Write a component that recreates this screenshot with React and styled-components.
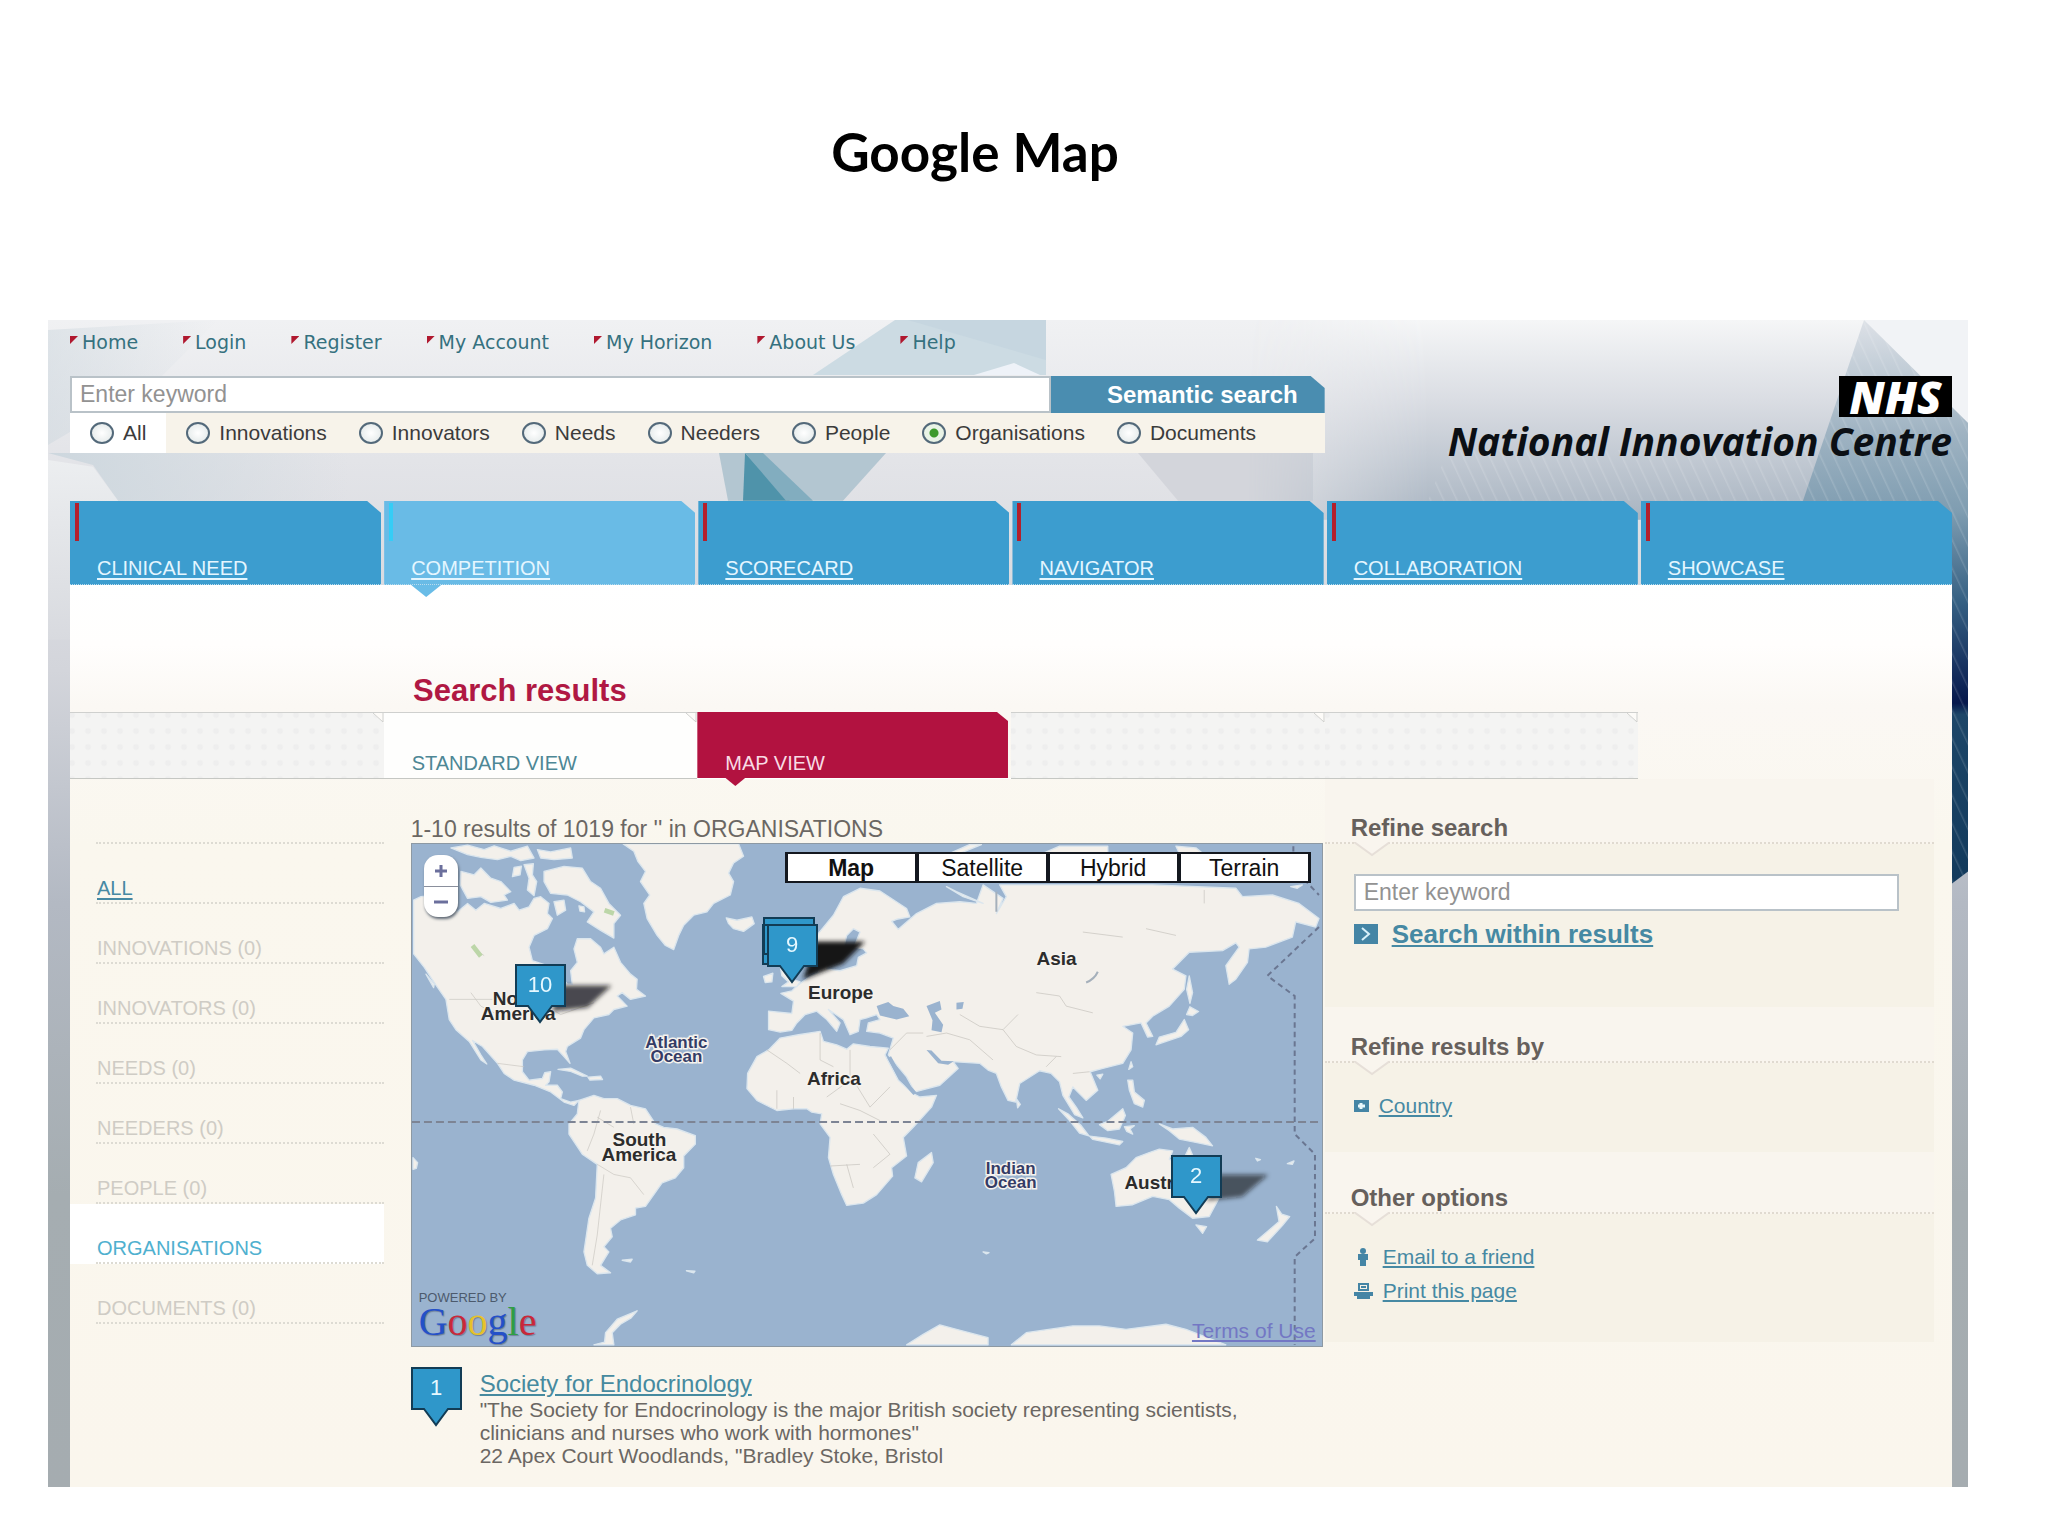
import React, { useState } from 'react';
import styled, { createGlobalStyle, css } from 'styled-components';

const GlobalStyle = createGlobalStyle`
  *, *::before, *::after {
    box-sizing: border-box;
  }

  body {
    margin: 0;
    background: #fff;
    font-family: 'Liberation Sans', Arial, sans-serif;
    color: #6b6763;
  }
`;

const Page = styled.div`
  padding: 0 80px 48px 48px;
`;

const PageTitle = styled.h1`
  margin: 0;
  padding: 118px 66px 134px 0;
  font-family: Lato, 'Open Sans', sans-serif;
  font-size: 53px;
  line-height: 68px;
  font-weight: 700;
  text-align: center;
  color: #000;
`;

const Stage = styled.div`
  position: relative;
  padding: 0 16px 0 22px;
  background: #e6e7ea;
`;

const Backdrop = styled.svg`
  position: absolute;
  inset: 0;
  width: 100%;
  height: 100%;
`;

const Site = styled.div`
  position: relative;
`;

// Top navigation
const TopNav = styled.nav`
  display: flex;
  gap: 45px;
  height: 56px;
  padding-top: 10px;
`;

const TopLink = styled.a`
  display: flex;
  align-items: flex-start;
  gap: 4px;
  font-family: 'DejaVu Sans', Verdana, sans-serif;
  font-size: 19px;
  line-height: 24px;
  color: #35717f;
  text-decoration: none;

  &::before {
    content: '';
    width: 8px;
    height: 8px;
    margin-top: 6px;
    background: #b0182f;
    clip-path: polygon(0 0, 100% 0, 0 100%);
  }
`;

// Search and logo
const Masthead = styled.header`
  display: grid;
  grid-template-columns: 2fr 1fr;
  height: 125px;
`;

const SearchForm = styled.form`
  display: flex;
  flex-direction: column;
`;

const SearchRow = styled.div`
  display: flex;
  height: 37px;
`;

const TextInput = styled.input`
  width: 100%;
  height: 37px;
  padding: 0 8px;
  border: 2px solid #b9c2c8;
  border-radius: 0;
  background: #fff;
  font-family: inherit;
  font-size: 23px;
  color: #555;

  &::placeholder {
    color: #929292;
    opacity: 1;
  }
`;

const SearchButton = styled.button`
  flex: 0 0 274px;
  padding: 0 27px 0 0;
  border: 0;
  background: #4a8db0;
  clip-path: polygon(0 0, calc(100% - 14px) 0, 100% 12px, 100% 100%, 0 100%);
  font-family: inherit;
  font-size: 24px;
  font-weight: 700;
  text-align: right;
  color: #fff;
`;

const ScopeRow = styled.div`
  display: flex;
  height: 40px;
  background: #f7f3ea;
`;

const Scope = styled.label`
  display: flex;
  align-items: center;
  gap: 9px;
  padding: 0 12px 0 20px;
  font-size: 21px;
  color: #3b3b3b;

  &:first-of-type {
    padding-right: 20px;
    background: #fff;
  }
`;

const Radio = styled.input`
  appearance: none;
  width: 24px;
  height: 22px;
  margin: 0;
  border: 2px solid #53697a;
  border-radius: 50%;
  background: radial-gradient(#ffffff, #dfe6e6);

  &:checked {
    background: radial-gradient(circle, #3c9a2c 4px, #e9f3e6 5px);
  }
`;

const Logo = styled.div`
  display: flex;
  flex-direction: column;
  align-items: flex-end;
  font-family: 'Open Sans', 'Noto Sans', sans-serif;
  font-style: italic;
  white-space: nowrap;
`;

const LogoMark = styled.span`
  width: 113px;
  height: 41px;
  background: #000;
  font-size: 45px;
  line-height: 41px;
  font-weight: 800;
  text-align: center;
  color: #fff;
`;

const LogoName = styled.span`
  font-size: 39px;
  line-height: 48px;
  font-weight: 700;
  color: #0b0f14;
`;

// Section tabs
const Sections = styled.nav`
  display: grid;
  grid-template-columns: repeat(6, 1fr);
  gap: 3px;
`;

const SectionTab = styled.div`
  position: relative;
  height: 84px;

  ${({ $active }) =>
    $active &&
    css`
      &::after {
        content: '';
        position: absolute;
        top: 100%;
        left: 27px;
        width: 30px;
        height: 12px;
        background: #69bce7;
        clip-path: polygon(0 0, 100% 0, 50% 100%);
        z-index: 1;
      }
    `}
`;

const SectionLink = styled.a`
  display: flex;
  align-items: flex-end;
  height: 100%;
  padding: 0 0 4px 27px;
  background: linear-gradient(${({ $active }) => ($active ? '#35cdf6, #35cdf6' : '#b3202c, #b3202c')})
    no-repeat 5px 2px / 4px 38px
    ${({ $active }) => ($active ? '#69bbe6' : '#3c9dcf')};
  border-bottom: 1px dotted #b9dcee;
  clip-path: polygon(0 0, calc(100% - 14px) 0, 100% 12px, 100% 100%, 0 100%);
  font-size: 20px;
  line-height: 24px;
  color: #e4f6ff;
  text-underline-offset: 3px;
`;

// White panel under the tabs
const Panel = styled.main`
  padding-bottom: 20px;
  background: linear-gradient(#ffffff, #fffefd 60px, #fbf8f4 120px, #faf7ee 260px, #faf6ed);
`;

const Heading = styled.h2`
  margin: 0;
  padding: 88px 0 3px 343px;
  font-size: 31px;
  line-height: 36px;
  font-weight: 700;
  color: #b01843;
`;

const ViewTabs = styled.div`
  display: grid;
  grid-template-columns: repeat(6, 1fr);
`;

const ViewTab = styled.div`
  position: relative;
  height: 67px;
  border-bottom: 1px solid #c5c7c3;
  background: #f4f4f3;

  ${({ $kind }) =>
    $kind === 'blank' &&
    css`
      border-top: 1px solid #cfd0ce;
      background: radial-gradient(#eeeeee 2px, transparent 4px) 10px 10px / 16px 16px #f4f4f3;
    `}

  ${({ $kind }) =>
    $kind === 'open' &&
    css`
      border-top: 1px solid #cfd0ce;
      background: #fefefd;
    `}

  ${({ $kind }) =>
    $kind === 'active' &&
    css`
      border-bottom-color: #fff;
      background: transparent;

      &::after {
        content: '';
        position: absolute;
        top: 65px;
        left: 27px;
        width: 22px;
        height: 9px;
        background: #b21240;
        clip-path: polygon(0 0, 100% 0, 50% 100%);
      }
    `}
`;

const ViewLink = styled.a`
  display: flex;
  align-items: flex-end;
  height: 100%;
  margin-right: 3px;
  padding: 0 0 3px 28px;
  background: ${({ $active }) => ($active ? '#b21240' : 'transparent')};
  clip-path: polygon(0 0, calc(100% - 11px) 0, 100% 9px, 100% 100%, 0 100%);
  font-size: 20px;
  line-height: 24px;
  color: ${({ $active }) => ($active ? '#f8dbe4' : '#4d8795')};
  text-decoration: none;
`;

const TabNotch = styled.svg`
  position: absolute;
  top: 0;
  right: 0;
  width: 12px;
  height: 10px;
`;

const Columns = styled.div`
  display: grid;
  grid-template-columns: 1fr 3fr 2fr;
`;

// Left menu
const Menu = styled.ul`
  margin: 0;
  padding: 5px 0 0;
  list-style: none;
`;

const MenuItem = styled.li`
  height: 60px;
  padding-left: 26px;
  background: ${({ $current }) => ($current ? '#fff' : 'transparent')};
`;

const MenuLink = styled.a`
  display: flex;
  align-items: flex-end;
  height: 100%;
  padding: 0 0 2px 1px;
  border-bottom: 2px dotted #dddbd3;
  font-size: 20px;
  line-height: 24px;
  color: ${({ $tone }) => $tone};
  text-decoration: ${({ $underline }) => ($underline ? 'underline' : 'none')};
  text-underline-offset: 3px;
`;

const Results = styled.section`
  padding: 36px 2px 0 27px;
`;

const Summary = styled.p`
  margin: 0;
  font-size: 23px;
  line-height: 28px;
`;

// Map
const MapFrame = styled.div`
  position: relative;
  aspect-ratio: 912 / 504;
  border: 1px solid #8d99a3;
  background: #9ab3cf;
  overflow: hidden;
`;

const MapDrawing = styled.svg`
  display: block;
  width: 100%;
  height: 100%;

  text {
    font-size: 19px;
    font-weight: 700;
    fill: #2c2c2c;
    stroke: #f6f3ee;
    stroke-width: 3px;
    paint-order: stroke;
  }

  .ocean text {
    font-size: 17px;
    fill: #343c66;
    text-anchor: middle;
  }
`;

const ZoomControl = styled.div`
  position: absolute;
  top: 11px;
  left: 12px;
  width: 34px;
  border-radius: 14px;
  background: #fff;
  box-shadow: 1px 2px 3px #5c6672;
`;

const ZoomButton = styled.button`
  display: grid;
  place-items: center;
  width: 100%;
  height: 31px;
  padding: 0;
  border: 0;
  background: none;

  & + & {
    border-top: 1px solid #8a8f9c;
  }
`;

const MapTypes = styled.div`
  position: absolute;
  top: 8px;
  right: 11px;
  display: flex;
  border: 1px solid #14181f;
`;

const MapType = styled.button`
  width: 131px;
  height: 29px;
  padding: 0;
  border: 2px solid #14181f;
  border-width: 1px 2px;
  background: #fff;
  font-family: inherit;
  font-size: 23px;
  line-height: 24px;
  font-weight: ${({ $active }) => ($active ? 700 : 400)};
  color: #111;
`;

const PinButton = styled.button`
  position: absolute;
  left: ${({ $x }) => $x}%;
  top: ${({ $y }) => $y}%;
  padding: 0;
  border: 0;
  background: none;
`;

const PinShape = styled.svg`
  display: block;
  flex: none;
  width: 51px;
  height: 59px;

  path {
    fill: #2f97ca;
    stroke: #123c55;
    stroke-width: 2;
  }

  text {
    font-size: 22px;
    fill: #e6f8ff;
    text-anchor: middle;
  }
`;

const Powered = styled.div`
  position: absolute;
  left: 7px;
  bottom: 6px;
  display: flex;
  flex-direction: column;
  font-size: 13px;
  line-height: 12px;
  color: #4c5a6d;
`;

const Google = styled.span`
  font-family: 'Liberation Serif', serif;
  font-size: 40px;
  line-height: 36px;
  text-shadow: 1px 1px 1px #6d7f98;
`;

const Letter = styled.span`
  color: ${({ $color }) => $color};
`;

const Terms = styled.a`
  position: absolute;
  right: 6px;
  bottom: 2px;
  font-size: 21px;
  line-height: 26px;
  color: #7377c4;
`;

const Result = styled.article`
  display: flex;
  gap: 18px;
  padding-top: 20px;
`;

const ResultTitle = styled.a`
  display: block;
  padding-top: 3px;
  font-size: 24px;
  line-height: 28px;
  color: #468a9f;
`;

const ResultText = styled.p`
  margin: 0;
  max-width: 800px;
  font-size: 21px;
  line-height: 23px;
`;

// Right column
const Aside = styled.aside`
  padding-right: 18px;
`;

const Block = styled.section`
  height: ${({ $height }) => $height}px;
  background: #f6f2e7;
`;

const BlockTitle = styled.h3`
  position: relative;
  height: ${({ $height }) => $height}px;
  margin: 0;
  padding-left: 26px;
  display: flex;
  align-items: flex-end;
  background: #f9f5ee;
  border-bottom: 2px dotted #e0dad0;
  font-size: 24px;
  line-height: 28px;
  font-weight: 700;
  color: #66605c;
`;

const Notch = styled.svg`
  position: absolute;
  top: 100%;
  left: 29px;
  width: 36px;
  height: 15px;
`;

const BlockBody = styled.div`
  display: flex;
  flex-direction: column;
  align-items: flex-start;
  gap: ${({ $gap }) => $gap}px;
  padding: 30px 35px 0 29px;
`;

const OptionLink = styled.a`
  display: flex;
  align-items: center;
  gap: ${({ $strong }) => ($strong ? 14 : 10)}px;
  font-size: ${({ $strong }) => ($strong ? 26 : 21)}px;
  font-weight: ${({ $strong }) => ($strong ? 700 : 400)};
  line-height: 26px;
  color: #4689a3;
`;

const topLinks = ['Home', 'Login', 'Register', 'My Account', 'My Horizon', 'About Us', 'Help'];
const scopes = ['All', 'Innovations', 'Innovators', 'Needs', 'Needers', 'People', 'Organisations', 'Documents'];
const sections = ['CLINICAL NEED', 'COMPETITION', 'SCORECARD', 'NAVIGATOR', 'COLLABORATION', 'SHOWCASE'];
const menu = [
  { label: 'ALL', tone: '#4689a3', underline: true },
  { label: 'INNOVATIONS (0)' },
  { label: 'INNOVATORS (0)' },
  { label: 'NEEDS (0)' },
  { label: 'NEEDERS (0)' },
  { label: 'PEOPLE (0)' },
  { label: 'ORGANISATIONS', tone: '#4fb0cf', current: true },
  { label: 'DOCUMENTS (0)' },
];
const googleLetters = [
  ['G', '#2450c8'],
  ['o', '#c9283a'],
  ['o', '#e6c22a'],
  ['g', '#2450c8'],
  ['l', '#2f9e45'],
  ['e', '#c9283a'],
];

const Skyline = () => (
  <Backdrop viewBox="0 0 1920 1168" preserveAspectRatio="none" aria-hidden="true">
    <defs>
      <linearGradient id="side" x1="0" y1="0" x2="0" y2="1">
        <stop offset="0" stopColor="#f0f1f3" />
        <stop offset="0.12" stopColor="#e3e4e8" />
        <stop offset="0.3" stopColor="#d3d5db" />
        <stop offset="0.5" stopColor="#b3b9c3" />
        <stop offset="0.75" stopColor="#a5adb1" />
        <stop offset="1" stopColor="#a5acb0" />
      </linearGradient>
      <linearGradient id="haze" x1="0" y1="0" x2="1" y2="0">
        <stop offset="0" stopColor="#cdd7de" />
        <stop offset="1" stopColor="#cdd7de" stopOpacity="0" />
      </linearGradient>
      <linearGradient id="ledge" x1="0" y1="0" x2="0" y2="1">
        <stop offset="0" stopColor="#eceef0" />
        <stop offset="1" stopColor="#d8dadf" />
      </linearGradient>
      <linearGradient id="sky" x1="0" y1="0" x2="0" y2="1">
        <stop offset="0" stopColor="#f5f6f7" />
        <stop offset="0.4" stopColor="#dadde3" />
        <stop offset="1" stopColor="#a8b4c1" />
      </linearGradient>
      <linearGradient id="skyFade" x1="0" y1="0" x2="1" y2="0">
        <stop offset="0" stopColor="#fff" stopOpacity="0" />
        <stop offset="0.25" stopColor="#fff" stopOpacity="1" />
      </linearGradient>
      <mask id="fade">
        <rect x="1200" y="0" width="720" height="400" fill="url(#skyFade)" />
      </mask>
      <linearGradient id="tower" x1="0" y1="0" x2="0" y2="1">
        <stop offset="0" stopColor="#dde1e7" />
        <stop offset="0.2" stopColor="#9fb3c2" />
        <stop offset="0.34" stopColor="#7f9db1" />
        <stop offset="0.5" stopColor="#356083" />
        <stop offset="0.68" stopColor="#06184c" />
        <stop offset="0.7" stopColor="#1d4668" />
        <stop offset="1" stopColor="#123a5c" />
      </linearGradient>
      <pattern id="ribs" width="12" height="20" patternUnits="userSpaceOnUse" patternTransform="rotate(-25)">
        <path d="M0 0V20" stroke="#fff" strokeOpacity="0.14" strokeWidth="3" />
      </pattern>
    </defs>
    <rect width="1920" height="1168" fill="url(#side)" />
    <path d="M0 10L170 0L110 60L0 125Z" fill="url(#haze)" opacity="0.5" />
    <path d="M0 133H300V181H70L45 145Z" fill="url(#haze)" />
    <path d="M0 140L45 147L70 181V320H0Z" fill="url(#ledge)" />
    <path d="M847 0H998V55H765Z" fill="#ccdbe3" />
    <path d="M860 0L998 40V0Z" fill="#bfd2dd" opacity="0.5" />
    <path d="M926 55L966 43L992 55Z" fill="#eef2f8" />
    <path d="M671 133H838L795 181H680Z" fill="#b3c6d1" />
    <path d="M697 133L742 181H695Z" fill="#4f93aa" />
    <path d="M697 133H715L765 181H738Z" fill="#82adbf" />
    <path d="M1090 133H1265V181H1130Z" fill="#d3d5db" />
    <rect x="1200" width="720" height="200" fill="url(#sky)" mask="url(#fade)" />
    <path d="M1816 0H1920V103Z" fill="#f1f3f6" />
    <path d="M1816 0L1755 181V564H1904L1920 552V103Z" fill="url(#tower)" />
    <path d="M1816 0L1755 181V564H1904L1920 552V103Z" fill="url(#ribs)" />
    <path d="M1400 130H1770L1755 181H1380Z" fill="url(#ribs)" />
  </Backdrop>
);

const Pin = ({ number, stacked }) => (
  <PinShape viewBox="0 0 51 59" overflow="visible" aria-hidden="true">
    {stacked && <path d="M-4 1H45V40H-4Z M-3 -6H47V30H-3Z" />}
    <path d="M1 1H50V42H37L25 58L13 42H1Z" />
    <text x="25" y="28">{number}</text>
  </PinShape>
);

const WorldMap = () => (
  <MapDrawing viewBox="0 0 912 504" preserveAspectRatio="none" role="img" aria-label="World map">
    <defs>
      <filter id="soft">
        <feGaussianBlur stdDeviation="2" />
      </filter>
    </defs>
    <g fill="#f3f0eb" stroke="#dbe6ee" strokeWidth="4" strokeLinejoin="round">
      {/* Americas */}
      <g transform="translate(-11 -13) scale(0.3333 0.338)">
        <path d="M668 38H1015L1030 75L1000 95L985 125L1000 150L990 190L940 215L920 240L880 250L850 280L835 310L820 352L795 340L770 310L740 260L730 215L748 190L720 150L735 120L712 90L700 60Z" />
        <path d="M38 205L60 195L110 190L140 215L170 240L200 215L225 235L250 215L300 230L340 215L355 235L385 225L400 200L420 195L445 215L440 245L455 260L440 290L400 310L385 345L395 385L440 400L480 430L500 455L515 455L510 415L530 390L520 350L530 320L570 320L600 345L610 365L640 345L660 390L690 425L710 440L708 470L735 490L690 500L665 480L650 490L680 520L640 530L625 545L580 555L550 590L540 615L500 640L495 655L508 690L490 670L470 648L430 650L380 655L365 680L365 715L385 740L425 735L432 718L450 715L445 745L435 755L470 755L485 775L480 795L510 805L535 800L520 815L490 805L450 775L400 755L340 740L310 720L290 690L245 640L215 622L240 665L258 692L240 680L205 625L165 590L145 560L135 500L100 450L70 405L38 365Z" />
        <path d="M430 120L490 105L545 110L570 150L600 170L625 215L660 250L640 275L640 318L600 295L560 270L580 240L540 210L500 190L450 185L430 150Z" />
        <path d="M180 120L220 130L240 110L270 140L300 150L330 180L310 190L320 205L270 212L240 195L200 200L178 160Z" />
        <path d="M150 50L200 42L250 55L280 44L330 60L380 45L400 80L360 88L330 75L290 85L240 78L200 70Z" />
        <path d="M410 55L450 62L510 50L515 80L460 85L420 80Z" />
        <path d="M370 100L398 97L395 130L408 150L400 192L380 175L385 140Z" />
        <path d="M340 108L362 104L358 130L335 135Z" />
        <path d="M460 210L490 205L495 235L470 250Z" />
        <path d="M535 222L550 225L552 240L538 238Z" />
        <path d="M978 258L1010 265L1055 255L1062 275L1030 298L1000 290L985 275Z" />
        <path d="M472 708L510 704L560 728L545 728L510 714Z" />
        <path d="M562 731L600 728L606 738L568 740Z" />
        <path d="M75 425L100 455L98 465Z" />
        <path d="M535 800L580 785L610 795L650 795L690 815L735 825L765 870L790 880L830 885L885 905L885 930L850 965L850 1000L825 1030L785 1045L760 1080L735 1115L705 1120L705 1140L660 1155L630 1180L635 1205L610 1235L625 1250L600 1290L630 1312L590 1315L560 1290L550 1250L565 1150L585 1090L590 990L545 960L505 900L505 870L530 840Z" />
        <path d="M665 1275L695 1272L690 1280Z M858 1306L884 1307L880 1312Z" />
        <path d="M580 1526L612 1518L615 1490L650 1450L710 1425L692 1446L660 1465L635 1490L640 1526Z" />
        <path d="M36 970L50 985L46 1002L36 1005Z" />
      </g>
      {/* Europe, Africa, Asia and Oceania */}
      <g transform="translate(449 -13) scale(0.3333 0.338)">
        <path d="M-275 650L-240 615L-185 605L-120 595L-110 625L-70 635L-40 648L-20 632L30 640L85 645L75 665L115 740L160 780L180 790L230 785L215 820L160 880L130 910L140 965L95 1000L98 1025L50 1080L10 1105L-40 1112L-55 1080L-80 1020L-95 970L-90 910L-120 870L-115 840L-145 835L-160 825L-200 825L-250 830L-310 800L-340 765L-338 720L-310 670Z" />
        <path d="M215 955L220 985L185 1042L165 1030L175 985Z" />
        <path d="M-275 535L-205 542L-200 505L-238 482L-205 475L-190 460L-150 432L-125 420L-118 395L-100 390L-100 410L-60 415L-10 400L-5 375L20 362L10 350L-18 345L0 300L-20 290L-40 310L-50 350L-80 365L-95 345L-125 345L-130 310L-80 250L-50 195L0 170L60 178L140 230L150 255L110 262L95 268L115 292L170 245L230 215L300 210L350 215L370 160L430 200L410 245L440 195L420 160H880L1130 170L1150 195L1240 190L1320 215L1380 260L1370 285L1310 270L1300 315L1220 345L1170 350L1165 390L1130 440L1110 455L1100 400L1140 345L1130 332L1090 355L990 360L940 410L980 430L975 470L930 520L880 550L860 570L880 610L865 612L845 570L790 580L820 600L815 650L790 690L730 705L692 715L715 770L680 800L640 760L628 790L650 820L670 852L645 842L610 785L600 745L575 720L540 712L480 750L468 805L445 800L425 760L410 720L385 710L360 690L280 685L295 705L240 755L165 775L140 730L85 665L100 615L60 600L20 595L25 570L60 560L50 545L20 555L0 560L-5 595L-30 605L-50 560L-95 530L-60 570L-70 595L-100 560L-130 535L-165 545L-190 570L-205 592L-240 597L-275 590Z" />
        <path d="M-290 432L-262 422L-265 448L-285 450Z M-235 462L-215 448L-235 430L-240 400L-225 385L-205 440L-180 448L-190 462Z" />
        <path d="M975 560L988 590L965 610L890 635L900 612L950 598Z M992 522L1018 536L1000 548L982 545Z" />
        <path d="M990 430L1000 480L992 512L982 470Z M815 685L820 700L808 708Z M712 725L730 722L722 736Z" />
        <path d="M470 795L482 812L474 822Z M805 740L820 740L825 775L855 800L850 820L825 810L810 770Z" />
        <path d="M720 872L745 862L790 825L798 845L780 885L745 890Z" />
        <path d="M597 825L625 840L665 875L688 905L660 897L630 860Z M690 906L740 912L790 922L780 932L700 916Z" />
        <path d="M795 878L825 875L812 885L820 900L802 892Z M900 870L940 885L1000 880L1040 910L1060 935L1010 925L960 915L930 890Z" />
        <path d="M755 1020L800 1000L830 970L870 955L900 945L940 950L930 975L965 990L990 940L1010 985L1060 1040L1085 1080L1050 1145L1000 1150L960 1120L930 1095L880 1085L820 1110L770 1115L765 1070Z" />
        <path d="M1010 1170L1042 1175L1030 1195Z M1252 1115L1268 1138L1292 1145L1270 1172L1225 1220L1195 1215L1260 1160Z" />
        <path d="M140 1526L190 1495L240 1467L290 1480L385 1505V1526Z M455 1526L500 1490L640 1470L720 1470L800 1480L920 1465L980 1480L1100 1526Z" />
        <path d="M270 66L330 40H365L300 66Z M550 66L600 45H745V66Z M950 45L1010 50L1030 66H960Z M260 165L290 180L370 215L310 195Z" />
        <path d="M1190 972L1204 976L1195 980Z M1285 988L1305 980L1300 990Z M370 1250L388 1252L380 1256Z M1295 165L1330 160L1315 170Z" />
      </g>
    </g>
    <g transform="translate(449 -13) scale(0.3333 0.338)">
      {/* inland seas */}
      <g fill="#9ab3cf">
        <path d="M50 520L85 508L100 520L130 528L148 550L110 560L60 548Z" />
        <path d="M200 520L240 505L245 530L225 540L250 575L245 598L215 592L218 562Z" />
        <path d="M290 510L312 508L308 528L290 530Z M200 650L215 652L245 682L282 684L265 694L235 690Z" />
      </g>
      <path d="M88 672L120 730L165 780" fill="none" stroke="#9ab3cf" strokeWidth="12" />
      <path d="M680 450Q705 440 715 418M410 180V240" fill="none" stroke="#a5b0bb" strokeWidth="6" />
      {/* borders */}
      <g fill="none" stroke="#c4c1bb" strokeWidth="2">
        <path d="M300 545L360 580L430 590L470 640L530 665L605 670M430 590L475 545M200 610L260 600L330 620L400 680M560 700L590 670M640 720L690 715M90 650L140 600L190 600" />
        <path d="M-280 650L-220 690L-180 720M-120 600L-120 680L-80 700M-30 650L-30 740L-100 790M-20 740L30 820L90 760M-250 770L-250 825M-200 790V825M-60 810L0 830L60 860M-90 995L0 990M-40 990L-20 1060M40 900L90 960L40 1000" />
        <path d="M530 480L600 490L620 520L700 540M670 300L790 315M860 290L950 310M1035 175V215" />
      </g>
      <path d="M1303 45V110L1380 190M1380 285L1225 430L1307 490V900L1368 960V1210L1307 1265V1526" fill="none" stroke="#6a7691" strokeWidth="6" strokeDasharray="16 12" />
    </g>
    <g transform="translate(-11 -13) scale(0.3333 0.338)" fill="none" stroke="#c9c6c0" strokeWidth="2">
      <path d="M590 990L640 1020L690 1030L730 1080M600 830L580 900L560 950M640 880L590 850M610 1020L590 1200L575 1290M690 820L700 870M145 500H400L480 545L580 510M290 690L370 700M215 345L250 370M210 480L240 520L280 540" />
      <path d="M215 340L240 372M612 235L640 245" stroke="#bcd6a8" strokeWidth="14" />
    </g>
    <path d="M0 279H908" stroke="#7d8494" strokeWidth="2" strokeDasharray="8 4" />
    <text x="81" y="162">North</text>
    <text x="69" y="177">America</text>
    <text x="397" y="156">Europe</text>
    <text x="396" y="242">Africa</text>
    <text x="626" y="121">Asia</text>
    <text x="201" y="303">South</text>
    <text x="190" y="318">America</text>
    <text x="714" y="346">Australia</text>
    <g className="ocean">
      <text x="265" y="205">Atlantic</text>
      <text x="265" y="219">Ocean</text>
      <text x="600" y="331">Indian</text>
      <text x="600" y="345">Ocean</text>
    </g>
    <g fill="#151517" filter="url(#soft)">
      <path d="M404 98H454L432 120L392 136Z" />
      <path d="M150 142H200L176 164L140 168Z" opacity="0.75" />
      <path d="M808 332H858L832 354L796 358Z" opacity="0.6" />
    </g>
  </MapDrawing>
);

const CornerNotch = () => (
  <TabNotch viewBox="0 0 12 10" aria-hidden="true">
    <path d="M0 0H12V10Z" fill="#fdfbf8" />
    <path d="M1 0L11 9V0" fill="none" stroke="#cfd0ce" />
  </TabNotch>
);

const BlockHeading = ({ height, children }) => (
  <BlockTitle $height={height}>
    {children}
    <Notch viewBox="0 0 36 15" aria-hidden="true">
      <path d="M0 0L18 13L36 0" fill="#f9f5ee" stroke="#e6dfd8" strokeWidth="2" />
    </Notch>
  </BlockTitle>
);

const App = () => {
  const [scope, setScope] = useState('Organisations');
  const [mapType, setMapType] = useState('Map');

  return (
    <>
      <GlobalStyle />
      <Page>
        <PageTitle>Google Map</PageTitle>
        <Stage>
          <Skyline />
          <Site>
            <TopNav>
              {topLinks.map((label) => (
                <TopLink key={label} href="#">{label}</TopLink>
              ))}
            </TopNav>

            <Masthead>
              <SearchForm onSubmit={(e) => e.preventDefault()}>
                <SearchRow>
                  <TextInput type="text" placeholder="Enter keyword" aria-label="Keyword" />
                  <SearchButton type="submit">Semantic search</SearchButton>
                </SearchRow>
                <ScopeRow role="radiogroup" aria-label="Search in">
                  {scopes.map((label) => (
                    <Scope key={label}>
                      <Radio
                        type="radio"
                        name="scope"
                        checked={scope === label}
                        onChange={() => setScope(label)}
                      />
                      {label}
                    </Scope>
                  ))}
                </ScopeRow>
              </SearchForm>
              <Logo>
                <LogoMark>NHS</LogoMark>
                <LogoName>National Innovation Centre</LogoName>
              </Logo>
            </Masthead>

            <Sections>
              {sections.map((label) => (
                <SectionTab key={label} $active={label === 'COMPETITION'}>
                  <SectionLink href="#" $active={label === 'COMPETITION'}>{label}</SectionLink>
                </SectionTab>
              ))}
            </Sections>

            <Panel>
              <Heading>Search results</Heading>
              <ViewTabs>
                <ViewTab $kind="blank"><CornerNotch /></ViewTab>
                <ViewTab $kind="open"><ViewLink href="#">STANDARD VIEW</ViewLink><CornerNotch /></ViewTab>
                <ViewTab $kind="active"><ViewLink href="#" $active>MAP VIEW</ViewLink></ViewTab>
                <ViewTab $kind="blank"><CornerNotch /></ViewTab>
                <ViewTab $kind="blank"><CornerNotch /></ViewTab>
              </ViewTabs>

              <Columns>
                <Menu>
                  <MenuItem><MenuLink as="span" /></MenuItem>
                  {menu.map((item) => (
                    <MenuItem key={item.label} $current={item.current}>
                      <MenuLink href="#" $tone={item.tone || '#cfccc5'} $underline={item.underline}>
                        {item.label}
                      </MenuLink>
                    </MenuItem>
                  ))}
                </Menu>

                <Results>
                  <Summary>1-10 results of 1019 for '' in ORGANISATIONS</Summary>
                  <MapFrame>
                    <WorldMap />
                    <ZoomControl>
                      <ZoomButton type="button" aria-label="Zoom in">
                        <svg width="14" height="14" viewBox="0 0 14 14">
                          <path d="M7 1V13M1 7H13" stroke="#6b6f9c" strokeWidth="3" />
                        </svg>
                      </ZoomButton>
                      <ZoomButton type="button" aria-label="Zoom out">
                        <svg width="14" height="14" viewBox="0 0 14 14">
                          <path d="M0 7H14" stroke="#6b6f9c" strokeWidth="3" />
                        </svg>
                      </ZoomButton>
                    </ZoomControl>
                    <MapTypes>
                      {['Map', 'Satellite', 'Hybrid', 'Terrain'].map((type) => (
                        <MapType
                          key={type}
                          type="button"
                          $active={mapType === type}
                          onClick={() => setMapType(type)}
                        >
                          {type}
                        </MapType>
                      ))}
                    </MapTypes>
                    <PinButton type="button" $x={11.4} $y={24}><Pin number="10" /></PinButton>
                    <PinButton type="button" $x={39} $y={16}><Pin number="9" stacked /></PinButton>
                    <PinButton type="button" $x={83.4} $y={62}><Pin number="2" /></PinButton>
                    <Powered>
                      POWERED BY
                      <Google>
                        {googleLetters.map(([letter, color], i) => (
                          <Letter key={i} $color={color}>{letter}</Letter>
                        ))}
                      </Google>
                    </Powered>
                    <Terms href="#">Terms of Use</Terms>
                  </MapFrame>

                  <Result>
                    <Pin number="1" />
                    <div>
                      <ResultTitle href="#">Society for Endocrinology</ResultTitle>
                      <ResultText>
                        "The Society for Endocrinology is the major British society representing scientists,
                        clinicians and nurses who work with hormones"
                      </ResultText>
                      <ResultText>22 Apex Court Woodlands, "Bradley Stoke, Bristol</ResultText>
                    </div>
                  </Result>
                </Results>

                <Aside>
                  <Block $height={228}>
                    <BlockHeading height={65}>Refine search</BlockHeading>
                    <BlockBody $gap={10}>
                      <TextInput type="text" placeholder="Enter keyword" aria-label="Refine keyword" />
                      <OptionLink href="#" $strong>
                        <svg width="24" height="20" viewBox="0 0 24 20" aria-hidden="true">
                          <rect width="24" height="20" fill="#4485a5" />
                          <path d="M8 4L15 10L8 16" fill="none" stroke="#d8f1fa" strokeWidth="2" />
                        </svg>
                        Search within results
                      </OptionLink>
                    </BlockBody>
                  </Block>
                  <Block $height={145}>
                    <BlockHeading height={56}>Refine results by</BlockHeading>
                    <BlockBody>
                      <OptionLink href="#">
                        <svg width="15" height="12" viewBox="0 0 15 12" aria-hidden="true">
                          <rect width="15" height="12" fill="#4485a5" />
                          <path d="M7 3V9M4 6H11" stroke="#e8f8fc" strokeWidth="3" />
                        </svg>
                        Country
                      </OptionLink>
                    </BlockBody>
                  </Block>
                  <Block $height={190}>
                    <BlockHeading height={62}>Other options</BlockHeading>
                    <BlockBody $gap={8}>
                      <OptionLink href="#">
                        <svg width="19" height="18" viewBox="0 0 19 18" aria-hidden="true">
                          <circle cx="9" cy="3" r="3" fill="#4485a5" />
                          <path d="M4 6H14V12H12V18H6V12H4Z" fill="#4485a5" />
                        </svg>
                        Email to a friend
                      </OptionLink>
                      <OptionLink href="#">
                        <svg width="19" height="16" viewBox="0 0 19 16" aria-hidden="true">
                          <path d="M5 1H14V7H5Z" fill="none" stroke="#4485a5" strokeWidth="2" />
                          <path d="M7 4H12" stroke="#4485a5" strokeWidth="2" />
                          <path d="M0 9H19V13H16V16H3V13H0Z" fill="#4485a5" />
                        </svg>
                        Print this page
                      </OptionLink>
                    </BlockBody>
                  </Block>
                </Aside>
              </Columns>
            </Panel>
          </Site>
        </Stage>
      </Page>
    </>
  );
};

export default App;
